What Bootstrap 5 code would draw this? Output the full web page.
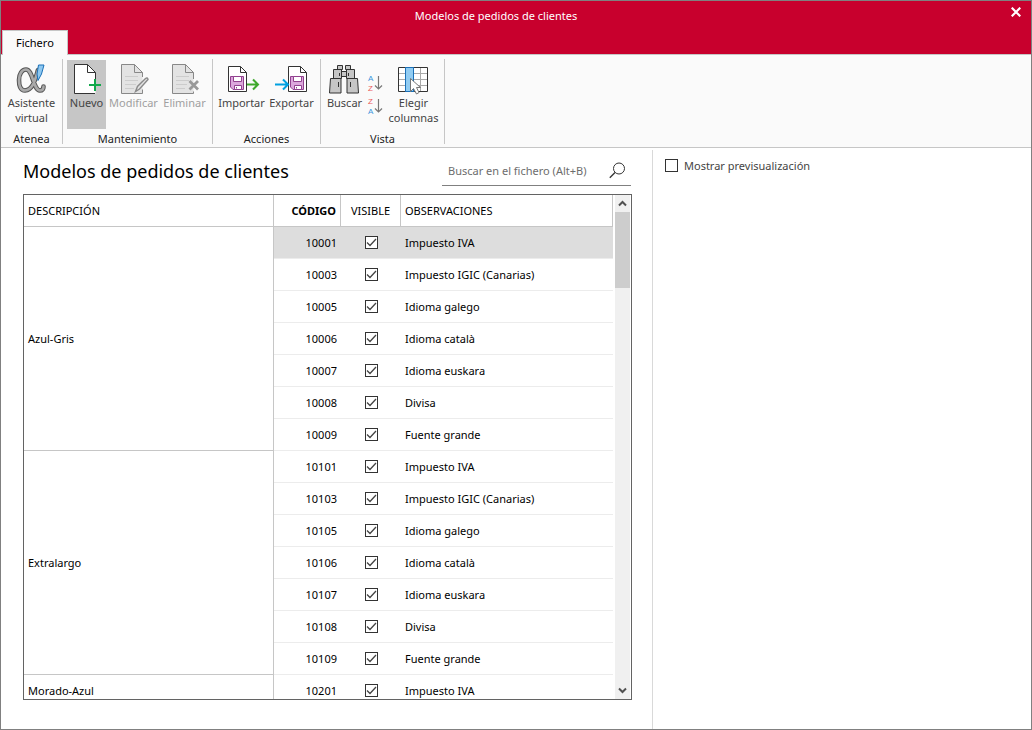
<!DOCTYPE html>
<html lang="es">
<head>
<meta charset="utf-8">
<meta name="viewport" content="width=device-width, initial-scale=1">
<title>Modelos de pedidos de clientes</title>
<link href="https://cdn.jsdelivr.net/npm/bootstrap@5.3.0/dist/css/bootstrap.min.css" rel="stylesheet">
<style>
  :root { --brand: #c8002d; --line: #c6c6c6; --frame: #636363; --ribbon: #fafafa; }
  body { font-family: "Noto Sans", "Segoe UI", sans-serif; font-size: 11px; line-height: 15px; color: #000; }
  .window { border: 1px solid #808080; }
  .titlebar { background: var(--brand); border-bottom: 1px solid var(--line); }
  .titlebar h1 { font-size: 11px; line-height: 15px; padding: 7px 40px 0 0; }
  .close-btn { top: 4px; right: 8px; line-height: 0; padding: 2px; }
  .file-tab { background: var(--ribbon); border: 1px solid var(--line); border-bottom: 0; color: #000;
    font-size: 11px; line-height: 15px; padding: 4px 13px 5px; margin: 7px 0 -1px 1px; border-radius: 0; }
  .ribbon { background: var(--ribbon); border-bottom: 1px solid var(--line); padding-top: 4px; }
  .ribbon-group { padding: 1px 4px 0; }
  .ribbon-tools { height: 69px; column-gap: 1px; }
  .group-name { line-height: 16px; margin-top: 2px; color: #222; }
  .ribbon-sep { width: 1px; height: 85px; background: var(--line); }
  .tool { border: 0; border-radius: 0; background: transparent; padding: 3px 0 0; width: 49px; color: #444;
    font-size: 11px; line-height: 15px; display: flex; flex-direction: column; align-items: center; }
  .tool span { white-space: nowrap; }
  .tool svg { width: 33px; height: 32px; overflow: visible; flex: none; }
  .tool:disabled { color: #a0a0a0; }
  .tool.current { background: #c6c6c6; }
  .tool.w-s { width: 39px; } .tool.w-m { width: 47px; } .tool.w-l { width: 53px; }
  .sort-tools { width: 21px; padding-top: 14px; row-gap: 5px; }
  .sort-tools button { line-height: 0; border: 0; background: transparent; padding: 0; }
  .sort-tools svg { overflow: visible; font-family: "Liberation Sans", sans-serif; font-size: 8px; }
  .list-pane { padding: 0 20px 29px 22px; }
  .list-head { height: 46px; flex: none; }
  .list-head h2 { font-size: 18px; line-height: 24px; margin: 11px 0 0; }
  .search-box { width: 189px; height: 30px; margin: 8px 1px 0 0; border-bottom: 1px solid #808080; }
  .search-box input { border: 0; outline: 0; background: transparent; font-size: 11px; line-height: 15px; padding: 0 6px; color: #444; }
  .search-box input::placeholder { color: #6d6d6d; opacity: 1; }
  .search-box button { border: 0; background: transparent; padding: 0 5px; line-height: 0; }
  .grid-frame { border: 1px solid var(--frame); }
  .grid { table-layout: fixed; border-collapse: separate; border-spacing: 0; width: 100%; }
  .grid th, .grid td { height: 32px; padding: 0 4px; line-height: 15px; vertical-align: middle; }
  .grid th { font-weight: 400; border-bottom: 1px solid var(--line); border-right: 1px solid var(--line); }
  .grid td { border-bottom: 1px solid #ececec; }
  .grid .sorted { font-weight: 700; }
  .grid .picked td { background: #ddd; }
  .tick { appearance: none; display: block; margin: 0; width: 13px; height: 13px; border: 1px solid #333; background: #fff; flex: none; }
  .grid .tick { margin: 0 auto; }
  .tick:checked { background: #fff url("data:image/svg+xml,%3Csvg xmlns='http://www.w3.org/2000/svg' viewBox='0 0 11 11'%3E%3Cpath d='M1 5.500 4 8.500 10 2' fill='none' stroke='%23444' stroke-width='1.300'/%3E%3C/svg%3E") center / 11px 11px no-repeat; }
  .scroller { width: 18px; background: #f0f0f0; border: solid #fff; border-width: 0 1px 0 2px; }
  .scroller button { border: 0; background: transparent; padding: 0; height: 17px; line-height: 0; width: 100%; }
  .thumb { height: 76px; background: #cdcdcd; }
  .preview-pane { width: 379px; border-left: 1px solid #d9d9d9; margin-top: 2px; padding: 8px 12px; }
  .preview-pane label { color: #444; column-gap: 6px; }
</style>
</head>
<body>
<div class="window d-flex flex-column vh-100 overflow-hidden">
  <header class="titlebar position-relative">
    <h1 class="text-white text-center fw-normal m-0">Modelos de pedidos de clientes</h1>
    <button type="button" class="close-btn position-absolute border-0 bg-transparent" aria-label="Cerrar">
      <svg width="10" height="10" viewBox="0 0 10 10"><path d="M.7.7l8.600 8.600M9.300.7.7 9.300" stroke="#fff" stroke-width="2.200"/></svg>
    </button>
    <div class="d-flex"><button type="button" class="file-tab position-relative">Fichero</button></div>
  </header>

  <nav class="ribbon d-flex align-items-start" aria-label="Cinta de opciones">
    <section class="ribbon-group">
      <div class="ribbon-tools d-flex">
        <button type="button" class="tool w-l">
          <svg viewBox="0 0 33 32">
            <g fill="none" stroke-linecap="round">
              <path d="M23 7C20 17 18 27 10 27.500 5 27.500 4 22 4 17 4 11 7 6.500 11 6.500 18 6.500 18 27 25 27.500 27.500 27.500 28.500 25.500 28.500 23.500" stroke="#555" stroke-width="4.600"/>
              <path d="M23 7C20 17 18 27 10 27.500 5 27.500 4 22 4 17 4 11 7 6.500 11 6.500 18 6.500 18 27 25 27.500 27.500 27.500 28.500 25.500 28.500 23.500" stroke="#aaa" stroke-width="2.600"/>
            </g>
            <path d="M23.500 2h5.500l-2.500 9-3.500 6.500L22 11z" fill="#8ec8f0" stroke="#1a70b8"/>
          </svg>
          <span>Asistente</span><span>virtual</span>
        </button>
      </div>
      <div class="group-name text-center">Atenea</div>
    </section>
    <div class="ribbon-sep"></div>

    <section class="ribbon-group">
      <div class="ribbon-tools d-flex">
        <button type="button" class="tool w-s current">
          <svg viewBox="0 0 33 32">
            <path d="M4.500 1.500h13l8 8v21h-21z" fill="#fff"/>
            <path d="M25.500 16V9.500l-8-8h-13v29H25M17.500 1.500v8h8" fill="none" stroke="#333"/>
            <path d="M25 16v12M19 22h12" stroke="#12a84b" stroke-width="2"/>
          </svg>
          <span>Nuevo</span>
        </button>
        <button type="button" class="tool w-l" disabled>
          <svg viewBox="0 0 33 32">
            <path d="M4.500 1.500h13l8 8v21h-21z" fill="#e3e3e3"/>
            <path d="M8 13.500h13M8 17.500h13M8 21.500h11M8 25.500h9" stroke="#ccc"/>
            <path d="M25.500 14V9.500l-8-8h-13v29h21v-4M17.500 1.500v8h8" fill="none" stroke="#888"/>
            <path d="M18.500 28.500l2-5 8-8q2-1.500 2.500 1l-8.500 9.500z" fill="#e3e3e3" stroke="#8a8a8a" stroke-width="1.400"/>
          </svg>
          <span>Modificar</span>
        </button>
        <button type="button" class="tool w-m" disabled>
          <svg viewBox="0 0 33 32">
            <path d="M4.500 1.500h13l8 8v21h-21z" fill="#e3e3e3"/>
            <path d="M8 13.500h13M8 17.500h13M8 21.500h11M8 25.500h9" stroke="#ccc"/>
            <path d="M25.500 16V9.500l-8-8h-13v29h21v-2M17.500 1.500v8h8" fill="none" stroke="#888"/>
            <path d="M21.500 18l8.500 8.500M30 18l-8.500 8.500" stroke="#999" stroke-width="2.800"/>
          </svg>
          <span>Eliminar</span>
        </button>
      </div>
      <div class="group-name text-center">Mantenimiento</div>
    </section>
    <div class="ribbon-sep"></div>

    <section class="ribbon-group">
      <div class="ribbon-tools d-flex">
        <button type="button" class="tool">
          <svg viewBox="0 0 33 32">
            <path d="M3.500 3.500h12l6 6v19h-18z" fill="#fff" stroke="#333"/>
            <path d="M15.500 3.500v6h6" fill="none" stroke="#333"/>
            <path d="M5.500 13.500h13v13H8l-2.500-2.500z" fill="#dca8dc" stroke="#91418f"/>
            <path d="M8.500 13.500h8v5h-8zM9.500 22.500h7v4h-7z" fill="#fff" stroke="#91418f"/>
            <path d="M11.500 24v1.500" stroke="#91418f"/>
            <path d="M22 21.500h10M28 16.500l5 5-5 5" fill="none" stroke="#3fa92c" stroke-width="2"/>
          </svg>
          <span>Importar</span>
        </button>
        <button type="button" class="tool">
          <svg viewBox="0 0 33 32">
            <path d="M13.500 3.500h12l6 6v19h-18z" fill="#fff" stroke="#333"/>
            <path d="M25.500 3.500v6h6" fill="none" stroke="#333"/>
            <path d="M15.500 13.500h13v13H18l-2.500-2.500z" fill="#dca8dc" stroke="#91418f"/>
            <path d="M18.500 13.500h8v5h-8zM19.500 22.500h7v4h-7z" fill="#fff" stroke="#91418f"/>
            <path d="M21.500 24v1.500" stroke="#91418f"/>
            <path d="M0 21.500h12.500M8 16.500l5 5-5 5" fill="none" stroke="#00a0e0" stroke-width="2"/>
          </svg>
          <span>Exportar</span>
        </button>
      </div>
      <div class="group-name text-center">Acciones</div>
    </section>
    <div class="ribbon-sep"></div>

    <section class="ribbon-group">
      <div class="ribbon-tools d-flex">
        <button type="button" class="tool w-s">
          <svg viewBox="0 0 33 32">
            <g fill="#c6c6c6" stroke="#333">
              <path d="M9.500 2.500h5v4h-5zM17.500 2.500h5v4h-5zM13.500 8.500h5v5h-5zM5.500 6.500h8v9h-8zM18.500 6.500h8v9h-8zM2.500 15.500h10.500v14.500H1.500zM19 15.500h10.500l1 14.500H19z"/>
              <path d="M11.500 10v3M20.500 10v3M10.500 19v5M22.500 19v5" fill="none"/>
            </g>
          </svg>
          <span>Buscar</span>
        </button>
        <div class="sort-tools d-flex flex-column align-items-center">
          <button type="button" aria-label="Orden ascendente">
            <svg width="17" height="18" viewBox="0 0 17 18"><text x="1" y="7" fill="#3a96dd">A</text><text x="1" y="17" fill="#ea5b5b">Z</text><path d="M11.500 2v13M8 11.500l3.500 3.500 3.500-3.500" fill="none" stroke="#777" stroke-width="1.200"/></svg>
          </button>
          <button type="button" aria-label="Orden descendente">
            <svg width="17" height="18" viewBox="0 0 17 18"><text x="1" y="7" fill="#ea5b5b">Z</text><text x="1" y="17" fill="#3a96dd">A</text><path d="M11.500 2v13M8 11.500l3.500 3.500 3.500-3.500" fill="none" stroke="#777" stroke-width="1.200"/></svg>
          </button>
        </div>
        <button type="button" class="tool w-l">
          <svg viewBox="0 0 33 32">
            <path d="M1.500 4.500h29v24h-29z" fill="#fff"/>
            <path d="M2 10.500h28M2 16.500h28M2 22.500h28M23.500 5v23" stroke="#aaa"/>
            <path d="M1.500 4.500h29v24h-29z" fill="none" stroke="#333"/>
            <path d="M8.500 4.500h8v24h-8z" fill="#91ccf2" stroke="#1a70b8"/>
            <path d="M13.500 15.500v13l3-3 3 5.500 2.500-1.500-2.500-5h4z" fill="#fff" stroke="#777"/>
          </svg>
          <span>Elegir</span><span>columnas</span>
        </button>
      </div>
      <div class="group-name text-center">Vista</div>
    </section>
    <div class="ribbon-sep"></div>
  </nav>

  <main class="d-flex flex-grow-1 overflow-hidden">
    <section class="list-pane d-flex flex-column flex-grow-1">
      <div class="list-head d-flex justify-content-between align-items-start">
        <h2 class="fw-normal">Modelos de pedidos de clientes</h2>
        <form class="search-box d-flex align-items-center">
          <input type="text" class="flex-grow-1 w-100" placeholder="Buscar en el fichero (Alt+B)" aria-label="Buscar en el fichero">
          <button type="button" aria-label="Buscar">
            <svg width="17" height="17" viewBox="0 0 17 17"><circle cx="10" cy="6.500" r="5.500" fill="none" stroke="#333"/><path d="M6 10.500.8 15.800" stroke="#333" stroke-width="1.300"/></svg>
          </button>
        </form>
      </div>
      <div class="grid-frame d-flex flex-grow-1 overflow-hidden">
        <div class="flex-grow-1 overflow-hidden">
          <table class="grid">
            <colgroup><col style="width:250px"><col style="width:67px"><col style="width:60px"><col></colgroup>
            <thead>
              <tr><th scope="col">DESCRIPCIÓN</th><th scope="col" class="sorted text-end" aria-sort="ascending">CÓDIGO</th><th scope="col" class="text-center">VISIBLE</th><th scope="col">OBSERVACIONES</th></tr>
            </thead>
            <tbody>
              <tr class="picked"><th scope="rowgroup" rowspan="7">Azul-Gris</th><td class="text-end">10001</td><td><input type="checkbox" class="tick" checked aria-label="Visible 10001"></td><td>Impuesto IVA</td></tr>
              <tr><td class="text-end">10003</td><td><input type="checkbox" class="tick" checked aria-label="Visible 10003"></td><td>Impuesto IGIC (Canarias)</td></tr>
              <tr><td class="text-end">10005</td><td><input type="checkbox" class="tick" checked aria-label="Visible 10005"></td><td>Idioma galego</td></tr>
              <tr><td class="text-end">10006</td><td><input type="checkbox" class="tick" checked aria-label="Visible 10006"></td><td>Idioma català</td></tr>
              <tr><td class="text-end">10007</td><td><input type="checkbox" class="tick" checked aria-label="Visible 10007"></td><td>Idioma euskara</td></tr>
              <tr><td class="text-end">10008</td><td><input type="checkbox" class="tick" checked aria-label="Visible 10008"></td><td>Divisa</td></tr>
              <tr><td class="text-end">10009</td><td><input type="checkbox" class="tick" checked aria-label="Visible 10009"></td><td>Fuente grande</td></tr>
              <tr><th scope="rowgroup" rowspan="7">Extralargo</th><td class="text-end">10101</td><td><input type="checkbox" class="tick" checked aria-label="Visible 10101"></td><td>Impuesto IVA</td></tr>
              <tr><td class="text-end">10103</td><td><input type="checkbox" class="tick" checked aria-label="Visible 10103"></td><td>Impuesto IGIC (Canarias)</td></tr>
              <tr><td class="text-end">10105</td><td><input type="checkbox" class="tick" checked aria-label="Visible 10105"></td><td>Idioma galego</td></tr>
              <tr><td class="text-end">10106</td><td><input type="checkbox" class="tick" checked aria-label="Visible 10106"></td><td>Idioma català</td></tr>
              <tr><td class="text-end">10107</td><td><input type="checkbox" class="tick" checked aria-label="Visible 10107"></td><td>Idioma euskara</td></tr>
              <tr><td class="text-end">10108</td><td><input type="checkbox" class="tick" checked aria-label="Visible 10108"></td><td>Divisa</td></tr>
              <tr><td class="text-end">10109</td><td><input type="checkbox" class="tick" checked aria-label="Visible 10109"></td><td>Fuente grande</td></tr>
              <tr><th scope="rowgroup">Morado-Azul</th><td class="text-end">10201</td><td><input type="checkbox" class="tick" checked aria-label="Visible 10201"></td><td>Impuesto IVA</td></tr>
            </tbody>
          </table>
        </div>
        <div class="scroller d-flex flex-column flex-shrink-0">
          <button type="button" aria-label="Subir"><svg width="9" height="7" viewBox="0 0 9 7"><path d="M1 5.500l3.500-3.500L8 5.500" fill="none" stroke="#505050" stroke-width="2"/></svg></button>
          <div class="thumb"></div>
          <button type="button" class="mt-auto" aria-label="Bajar"><svg width="9" height="7" viewBox="0 0 9 7"><path d="M1 1.500l3.500 3.500L8 1.500" fill="none" stroke="#505050" stroke-width="2"/></svg></button>
        </div>
      </div>
    </section>
    <aside class="preview-pane flex-shrink-0">
      <label class="d-flex align-items-center"><input type="checkbox" class="tick"> Mostrar previsualización</label>
    </aside>
  </main>
</div>
<script src="https://cdn.jsdelivr.net/npm/bootstrap@5.3.0/dist/js/bootstrap.bundle.min.js"></script>
</body>
</html>
